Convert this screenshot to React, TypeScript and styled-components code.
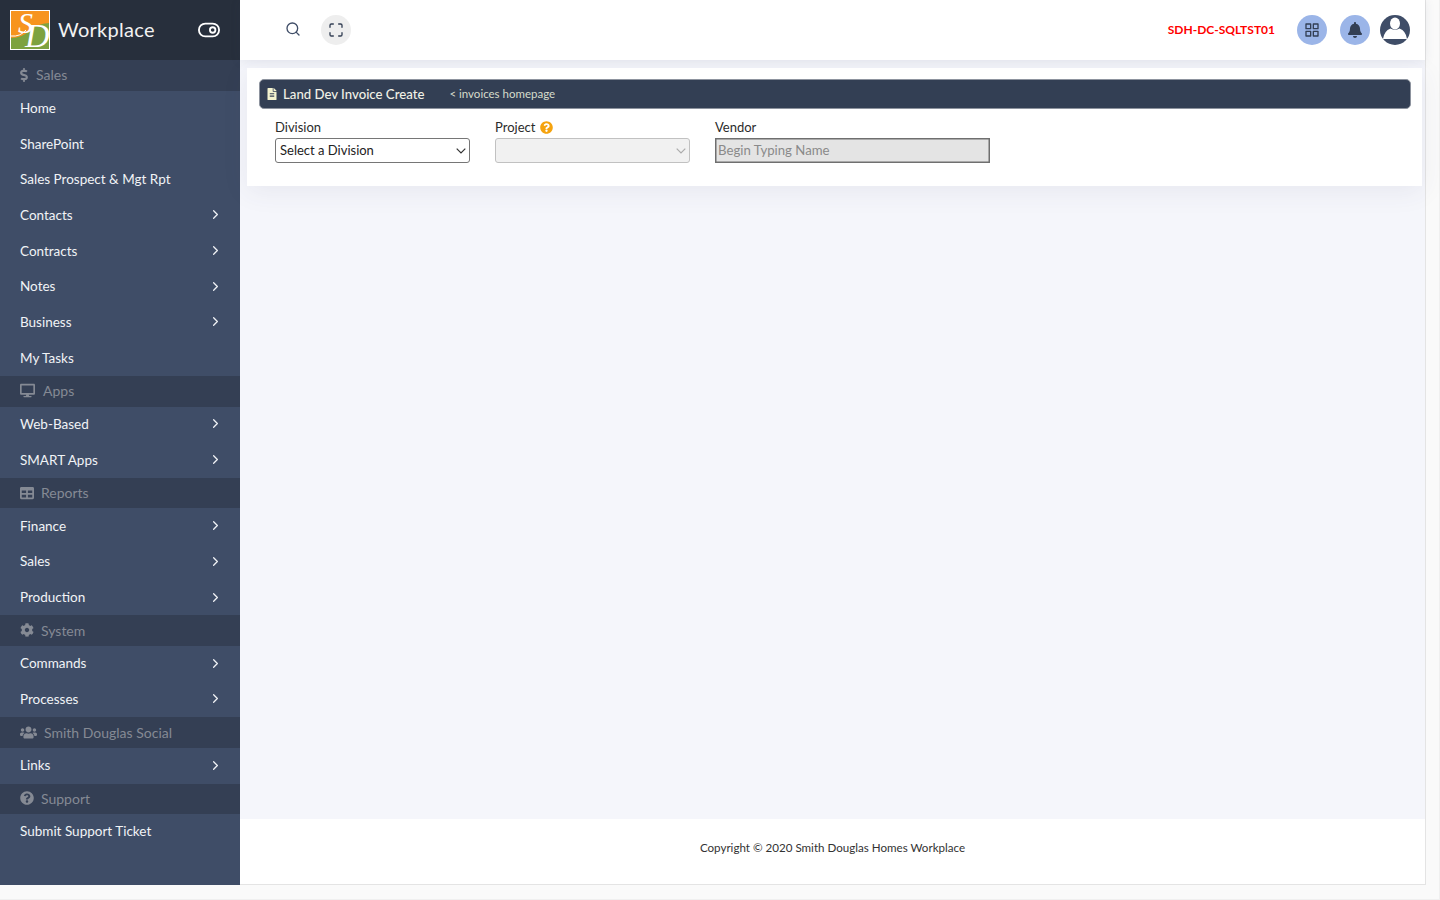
import React from 'react'
import styled, { createGlobalStyle } from 'styled-components'
import { FaBell, FaCog, FaDesktop, FaDollarSign, FaFileAlt, FaQuestionCircle, FaTable, FaUsers } from 'react-icons/fa'
import { FiChevronRight, FiGrid, FiMaximize, FiSearch, FiToggleRight } from 'react-icons/fi'

const GlobalStyle = createGlobalStyle`
  html, body { margin: 0; padding: 0; background: #fafafa; overflow: hidden; }
  * { box-sizing: border-box; }
  body { font-family: Lato, "Noto Sans", sans-serif; font-size: 14px; color: #222; }
`

const Page = styled.div`
  width: 1440px;
  height: 900px;
  border-right: 1px solid #f0f0f0;
  border-bottom: 1px solid #f0f0f0;
`

const Shell = styled.div`
  display: flex;
  width: 1426px;
  height: 885px;
  border-right: 1px solid #e4e4e4;
  border-bottom: 1px solid #e4e4e4;
  background: #f5f6fb;
`

const Sidebar = styled.nav`
  width: 240px;
  flex: none;
  height: 885px;
  background: #3f4d67;
  display: flex;
  flex-direction: column;
`

const Brand = styled.div`
  height: 60px;
  flex: none;
  background: #272f3c;
  display: flex;
  align-items: center;
  padding: 0 20px 0 10px;
  color: #f2f2f2;
  font-size: 20px;
  svg.toggle { margin-left: auto; font-size: 22px; color: #fff; }
`

const BrandName = styled.span`
  margin: 0 0 3px 8px;
  letter-spacing: 0.3px;
`

const Section = styled.div<{ $gap?: number; $icon?: number; $shift?: number }>`
  height: 30.5px;
  flex: none;
  background: #343f54;
  color: #858a94;
  display: flex;
  align-items: center;
  padding: 0 0 1px 20px;
  gap: ${p => p.$gap ?? 7}px;
  font-size: 14px;
  svg {
    width: ${p => p.$icon ?? 14}px;
    height: ${p => p.$icon ?? 14}px;
    margin-left: ${p => p.$shift ?? 0}px;
    flex: none;
  }
`

const Item = styled.a`
  height: 35.7px;
  flex: none;
  display: flex;
  align-items: center;
  justify-content: space-between;
  padding: 0 17px 1px 20px;
  color: #f1f3f6;
  font-size: 13.5px;
  svg { font-size: 15px; }
`

const Main = styled.div`
  flex: 1;
  display: flex;
  flex-direction: column;
  min-width: 0;
`

const Topbar = styled.header`
  height: 60px;
  flex: none;
  background: #fff;
  display: flex;
  align-items: center;
  padding: 0 15px 0 45px;
  box-shadow: 0 1px 10px rgba(60, 70, 100, 0.1);
  position: relative;
`

const SearchIcon = styled(FiSearch)`
  font-size: 16px;
  color: #3f4d67;
  margin-top: -2px;
`

const RoundButton = styled.span<{ $bg: string; $left?: number }>`
  width: 30px;
  height: 30px;
  border-radius: 50%;
  background: ${p => p.$bg};
  margin-left: ${p => p.$left ?? 0}px;
  display: flex;
  align-items: center;
  justify-content: center;
  color: #333f54;
  font-size: 16px;
  flex: none;
`

const Server = styled.span`
  margin: 0 0 2px auto;
  color: #f00;
  font-size: 12px;
  font-weight: 700;
`

const Content = styled.main`
  flex: 1;
  padding: 8px 3px 0 7px;
`

const Card = styled.section`
  height: 118px;
  background: #fff;
  padding: 11px 11px 0 12px;
  box-shadow: 0 5px 25px rgba(60, 70, 100, 0.08);
`

const TitleBar = styled.div`
  height: 30px;
  background: #333f54;
  border: 1px solid #8d939e;
  border-radius: 5px;
  display: flex;
  align-items: center;
  padding: 0 0 1px 6px;
  color: #f1f1e6;
  font-size: 13.2px;
  font-weight: 500;
  svg { font-size: 12px; color: #f3f3cf; margin-right: 5px; }
`

const BackLink = styled.a`
  margin-left: 25px;
  font-size: 11.5px;
  font-weight: 400;
  color: #d6dccb;
`

const Form = styled.form`
  display: flex;
  gap: 25px;
  padding: 10px 0 0 16px;
`

const Field = styled.div<{ $width: number }>`
  width: ${p => p.$width}px;
  display: flex;
  flex-direction: column;
`

const Label = styled.label`
  height: 18px;
  display: flex;
  align-items: center;
  gap: 4px;
  padding-bottom: 2px;
  font-size: 13px;
  color: #2b2b2b;
  svg { color: #f5a30f; font-size: 13px; margin: 0 0 0 1px; }
`

const chevron = (color: string) =>
  `url("data:image/svg+xml,%3Csvg xmlns='http://www.w3.org/2000/svg' width='10' height='6' viewBox='0 0 10 6'%3E%3Cpath d='M0.7 0.7 L5 5 L9.3 0.7' fill='none' stroke='${color}' stroke-width='1.2'/%3E%3C/svg%3E")`

const Select = styled.select`
  appearance: none;
  height: 25px;
  width: 100%;
  margin-top: 1px;
  padding: 0 0 1px 4px;
  font-family: inherit;
  font-size: 13px;
  color: #222;
  background: #fff ${chevron('%23333')} no-repeat right 3px center;
  border: 1px solid #767676;
  border-radius: 3px;
  &:disabled {
    background: #ececec ${chevron('%23888')} no-repeat right 3px center;
    border-color: #a8a8a8;
  }
`

const TextInput = styled.input`
  height: 25px;
  width: 100%;
  margin-top: 1px;
  padding: 0 2px 1px;
  font-family: inherit;
  font-size: 13.2px;
  background: #e4e4e4;
  border: 1px solid #6f6f6f;
  box-shadow: inset 0 0 0 0.5px #6f6f6f;
  &::placeholder { color: #8a8a8a; opacity: 1; }
`

const Footer = styled.footer`
  height: 65px;
  flex: none;
  background: #fff;
  display: flex;
  justify-content: center;
  padding-top: 22px;
  font-size: 11.6px;
  color: #333;
`

const LogoSvg = styled.svg`
  flex: none;
  overflow: visible;
`

const AvatarSvg = styled.svg`
  flex: none;
  margin-left: 10px;
`

function Logo() {
  return (
    <LogoSvg width="40" height="40" viewBox="0 0 40 40">
      <rect width="40" height="40" fill="#fff" />
      <rect x="1" y="1" width="38" height="38" fill="#f7941e" />
      <path d="M1 28 Q12 28 20 20 Q27 14 39 13 L39 39 L1 39 Z" fill="#7da23f" />
      <path d="M1 26 Q10 27 16 20" fill="none" stroke="#fff" strokeWidth="1" />
      <text x="8" y="23" fontFamily="'Liberation Serif', serif" fontStyle="italic" fontSize="30" fill="#fff">S</text>
      <text x="15" y="37" fontFamily="'Liberation Serif', serif" fontStyle="italic" fontSize="34" fill="#fff">D</text>
    </LogoSvg>
  )
}

function Avatar() {
  return (
    <AvatarSvg width="30" height="30" viewBox="0 0 30 30">
      <circle cx="15" cy="15" r="15" fill="#3f4d67" />
      <ellipse cx="15" cy="8.5" rx="5" ry="6" fill="#fff" />
      <path d="M3 24 Q4 16 10.5 13.5 Q15 16 19.5 13.5 Q26 16 27 24 Z" fill="#fff" />
    </AvatarSvg>
  )
}

function MenuItem({ label, arrow }: { label: string; arrow?: boolean }) {
  return <Item>{label}{arrow && <FiChevronRight />}</Item>
}

export default function App() {
  return (
    <>
      <GlobalStyle />
      <Page>
        <Shell>
          <Sidebar>
            <Brand>
              <Logo />
              <BrandName>Workplace</BrandName>
              <FiToggleRight className="toggle" />
            </Brand>
            <Section $gap={5} $icon={14} $shift={-3}><FaDollarSign />Sales</Section>
            <MenuItem label="Home" />
            <MenuItem label="SharePoint" />
            <MenuItem label="Sales Prospect & Mgt Rpt" />
            <MenuItem label="Contacts" arrow />
            <MenuItem label="Contracts" arrow />
            <MenuItem label="Notes" arrow />
            <MenuItem label="Business" arrow />
            <MenuItem label="My Tasks" />
            <Section $gap={8} $icon={15}><FaDesktop />Apps</Section>
            <MenuItem label="Web-Based" arrow />
            <MenuItem label="SMART Apps" arrow />
            <Section><FaTable />Reports</Section>
            <MenuItem label="Finance" arrow />
            <MenuItem label="Sales" arrow />
            <MenuItem label="Production" arrow />
            <Section><FaCog />System</Section>
            <MenuItem label="Commands" arrow />
            <MenuItem label="Processes" arrow />
            <Section $gap={7} $icon={17}><FaUsers />Smith Douglas Social</Section>
            <MenuItem label="Links" arrow />
            <Section><FaQuestionCircle />Support</Section>
            <MenuItem label="Submit Support Ticket" />
          </Sidebar>
          <Main>
            <Topbar>
              <SearchIcon />
              <RoundButton $bg="#eeeeee" $left={20}><FiMaximize /></RoundButton>
              <Server>SDH-DC-SQLTST01</Server>
              <RoundButton $bg="#9bb5e8" $left={22}><FiGrid /></RoundButton>
              <RoundButton $bg="#9bb5e8" $left={13}><FaBell /></RoundButton>
              <Avatar />
            </Topbar>
            <Content>
              <Card>
                <TitleBar>
                  <FaFileAlt />
                  Land Dev Invoice Create
                  <BackLink>&lt; invoices homepage</BackLink>
                </TitleBar>
                <Form>
                  <Field $width={195}>
                    <Label>Division</Label>
                    <Select defaultValue="">
                      <option value="">Select a Division</option>
                    </Select>
                  </Field>
                  <Field $width={195}>
                    <Label>Project <FaQuestionCircle /></Label>
                    <Select disabled />
                  </Field>
                  <Field $width={275}>
                    <Label>Vendor</Label>
                    <TextInput disabled placeholder="Begin Typing Name" />
                  </Field>
                </Form>
              </Card>
            </Content>
            <Footer>Copyright © 2020 Smith Douglas Homes Workplace</Footer>
          </Main>
        </Shell>
      </Page>
    </>
  )
}
